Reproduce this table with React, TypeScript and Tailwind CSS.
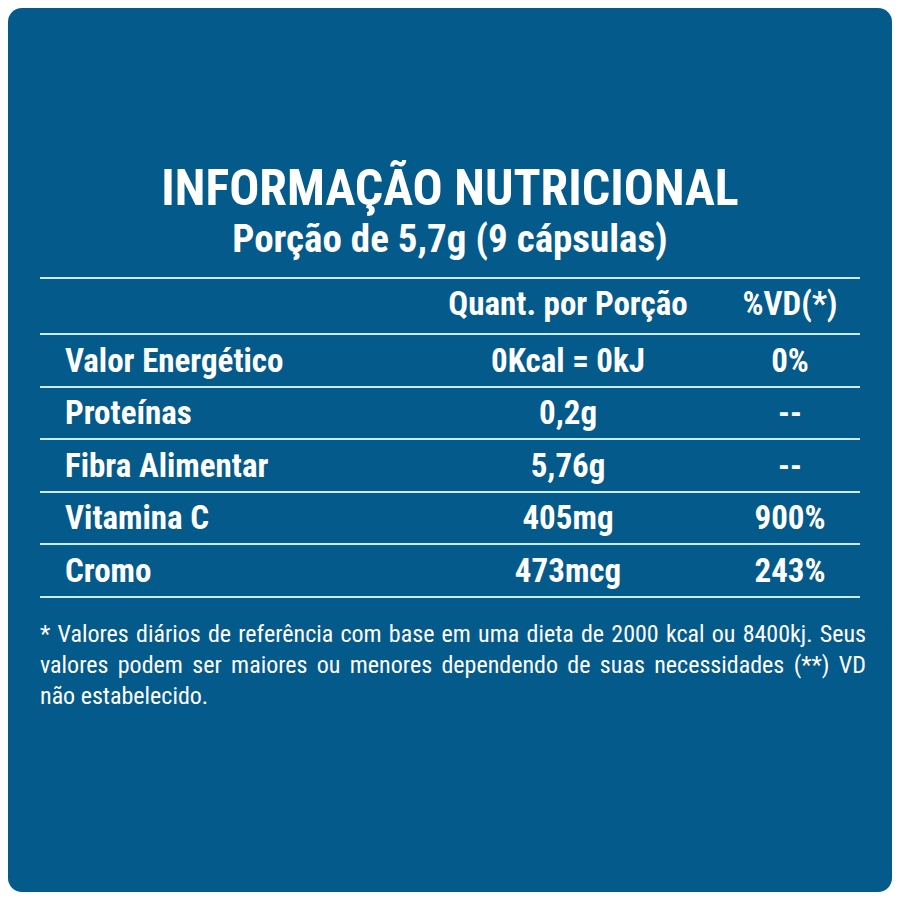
import React from 'react';

const rows = [
  { name: 'Valor Energético', qty: '0Kcal = 0kJ', vd: '0%' },
  { name: 'Proteínas', qty: '0,2g', vd: '--' },
  { name: 'Fibra Alimentar', qty: '5,76g', vd: '--' },
  { name: 'Vitamina C', qty: '405mg', vd: '900%' },
  { name: 'Cromo', qty: '473mcg', vd: '243%' },
];

export default function App() {
  return (
    <div className="w-[900px] h-[900px] bg-white p-[8px] font-['Roboto_Condensed',sans-serif]">
      <div className="h-full rounded-[14px] bg-[#055a8c] text-white pt-[152px] px-[32px]">
        {/* Heading */}
        <h1 className="text-center font-bold text-[50px] leading-[56px]">INFORMAÇÃO NUTRICIONAL</h1>
        <p className="mt-[2px] text-center font-bold text-[39px] leading-[42px]">Porção de 5,7g (9 cápsulas)</p>

        {/* Table */}
        <div className="mt-[17px] border-t-2 border-[#c8ecf8]">
          <div className="flex items-center h-[56px] border-b-2 border-[#c8ecf8] font-bold text-[33px] pb-[4px]">
            <div className="w-[400px]" />
            <div className="w-[256px] text-center">Quant. por Porção</div>
            <div className="w-[140px] ml-[24px] text-center">%VD(*)</div>
          </div>
          {rows.map((r) => (
            <div key={r.name} className="flex items-center h-[52.6px] border-b-2 border-[#c8ecf8] font-bold text-[33px]">
              <div className="w-[400px] pl-[25px]">{r.name}</div>
              <div className="w-[256px] text-center">{r.qty}</div>
              <div className="w-[140px] ml-[24px] text-center">{r.vd}</div>
            </div>
          ))}
        </div>

        {/* Footnote */}
        <p className="mt-[21px] w-[826px] text-justify text-[24px] leading-[31px]">
          * Valores diários de referência com base em uma dieta de 2000 kcal ou 8400kj. Seus valores podem ser maiores ou menores dependendo de suas necessidades (**) VD não&nbsp;estabelecido.
        </p>
      </div>
    </div>
  );
}
